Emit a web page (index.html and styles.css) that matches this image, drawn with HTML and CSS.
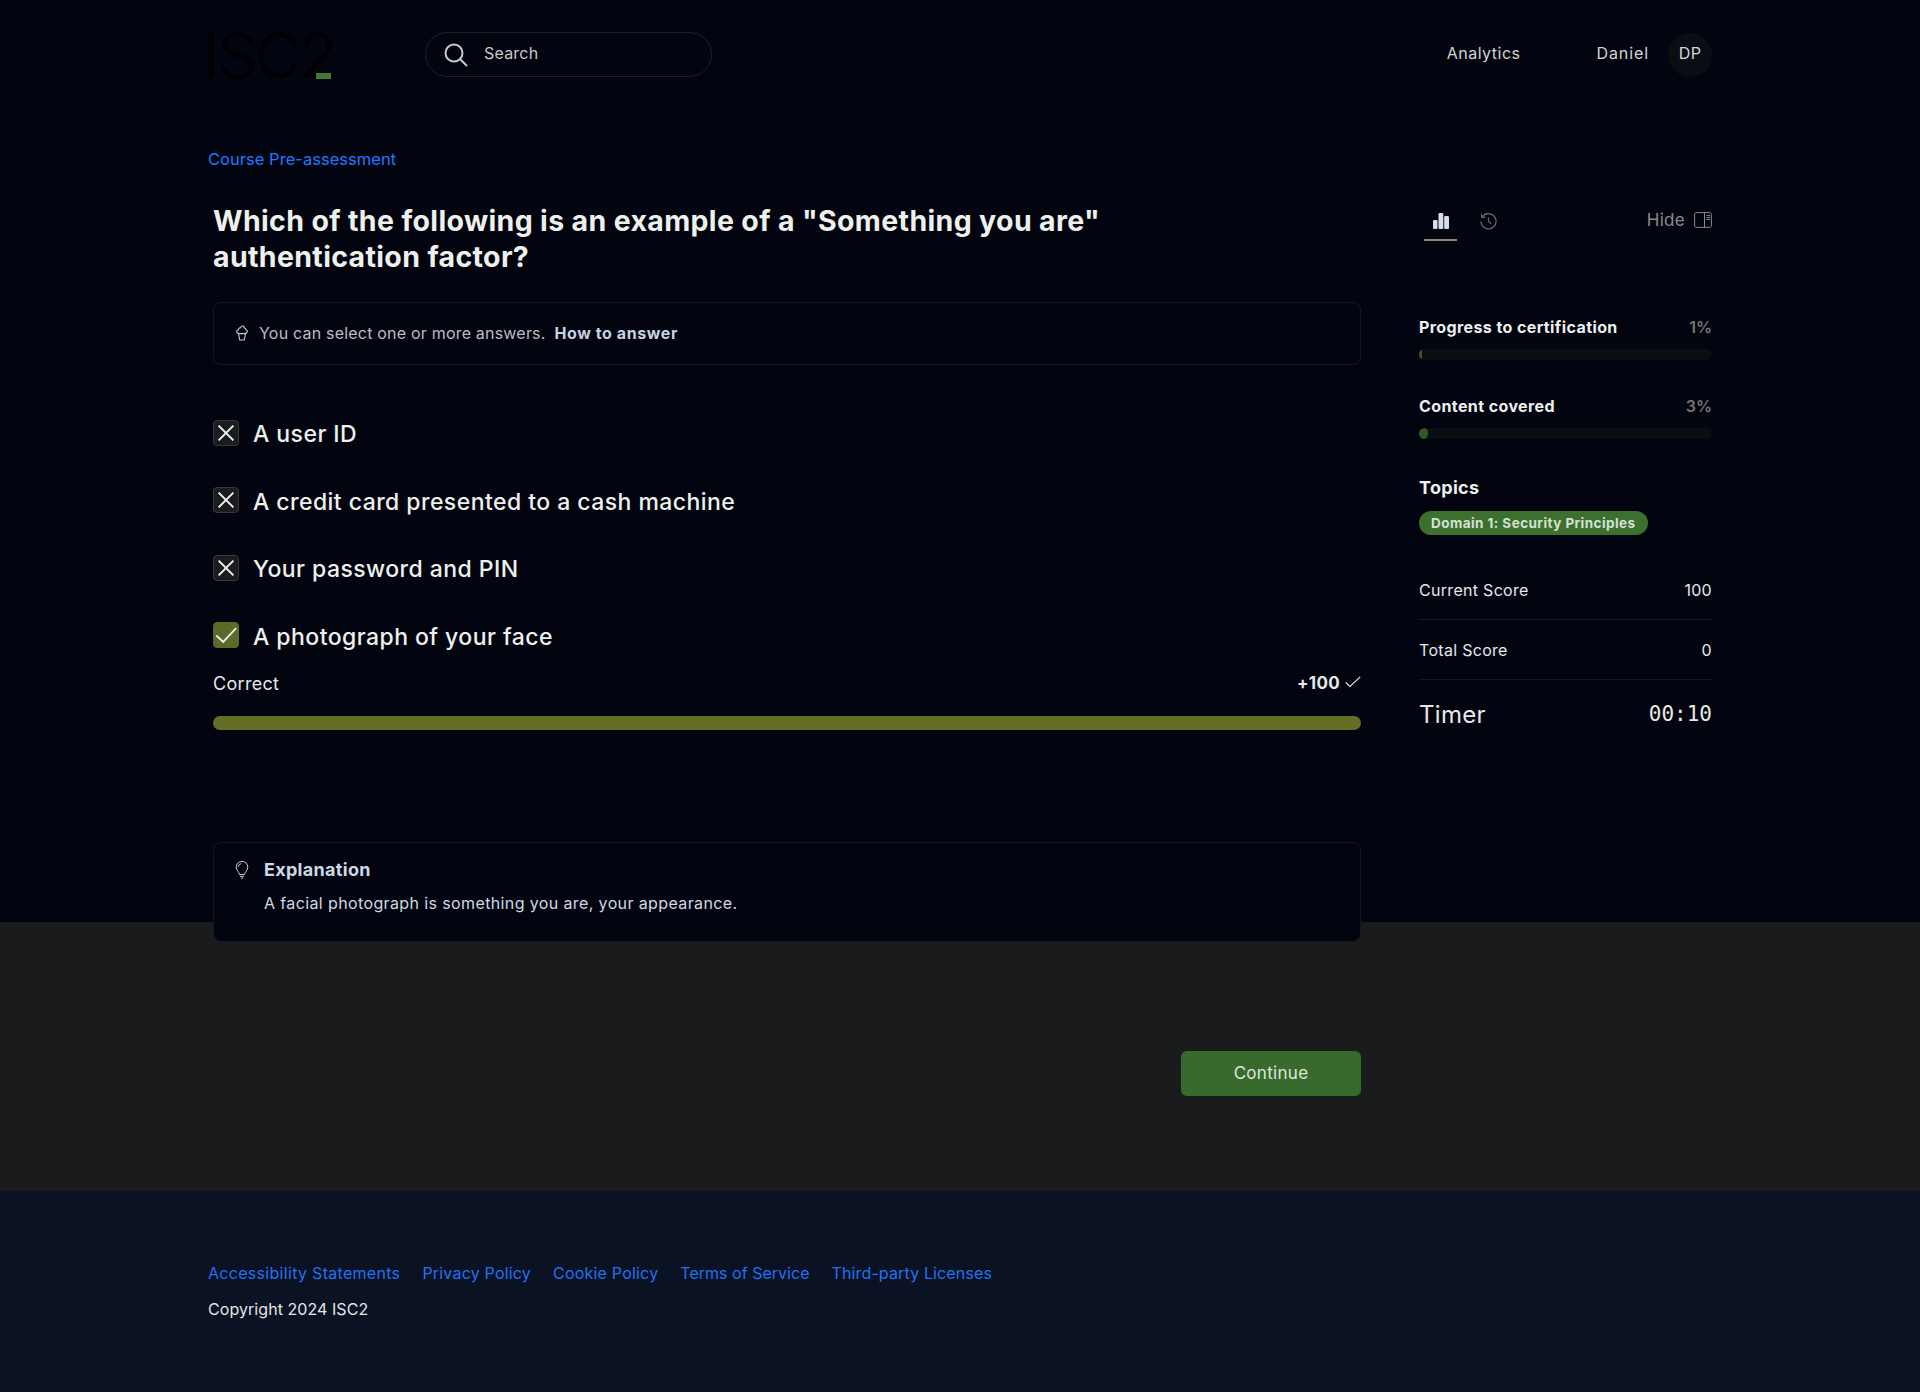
FILE: index.html
```html
<!DOCTYPE html>
<html lang="en">
<head>
<meta charset="utf-8">
<title>Course Pre-assessment</title>
<link rel="stylesheet" href="styles.css">
</head>
<body>
<div class="top">
  <header class="header">
    <div class="logo">ISC2<span class="logo-bar"></span></div>
    <div class="search">
      <svg class="search-icon" viewBox="0 0 24 24" fill="none" stroke="currentColor" stroke-width="2"><circle cx="10" cy="10" r="8.500"/><path d="M16 16l7 7"/></svg>
      <span class="search-text">Search</span>
    </div>
    <nav class="nav">
      <span class="nav-analytics">Analytics</span>
      <span class="nav-user">Daniel</span>
      <span class="avatar">DP</span>
    </nav>
  </header>
  <div class="crumb">Course Pre-assessment</div>
  <div class="columns">
    <main class="question">
      <h1 class="title">Which of the following is an example of a "Something you are" authentication factor?</h1>
      <div class="hint">
        <svg class="hint-icon" viewBox="0 0 14 16" fill="none" stroke="currentColor" stroke-width="1.100"><path d="M4 8.500C2.400 8.300 1.500 7.300 1.800 6 2 5 2.800 4.600 3.500 4.600 3.600 3 4.900 2.600 5.600 2.600 6 1.500 7 .8 8 1c1 .2 1.200 1 1 1.700 1.200.2 2 1 2 2 1.200.3 1.600 1.300 1.200 2.300-.3.8-1 1.300-2.200 1.500z"/><path d="M2.600 8.800h8.800M3.600 9l1.100 6h4.600l1.100-6"/></svg>
        <span class="hint-text">You can select one or more answers.</span>
        <strong class="hint-link">How to answer</strong>
      </div>
      <ul class="answers">
        <li class="answer">
          <span class="box"><svg viewBox="0 0 26 26" fill="none" stroke="currentColor" stroke-width="2.200"><path d="M5 5l16 16M21 5L5 21"/></svg></span>
          <span class="answer-text">A user ID</span>
        </li>
        <li class="answer">
          <span class="box"><svg viewBox="0 0 26 26" fill="none" stroke="currentColor" stroke-width="2.200"><path d="M5 5l16 16M21 5L5 21"/></svg></span>
          <span class="answer-text">A credit card presented to a cash machine</span>
        </li>
        <li class="answer">
          <span class="box"><svg viewBox="0 0 26 26" fill="none" stroke="currentColor" stroke-width="2.200"><path d="M5 5l16 16M21 5L5 21"/></svg></span>
          <span class="answer-text">Your password and PIN</span>
        </li>
        <li class="answer">
          <span class="box box-ok"><svg viewBox="0 0 26 26" fill="none" stroke="currentColor" stroke-width="2"><path d="M2.500 13.500l7.500 7L24 5.500"/></svg></span>
          <span class="answer-text">A photograph of your face</span>
        </li>
      </ul>
      <div class="result">
        <span>Correct</span>
        <span class="points"><b>+100</b><svg viewBox="0 0 16 12" fill="none" stroke="currentColor" stroke-width="1.100"><path d="M.8 6.500l4.200 4L15.200.8"/></svg></span>
      </div>
      <div class="result-bar"></div>
      <section class="explain">
        <svg class="bulb" viewBox="0 0 14 18" fill="none" stroke="currentColor" stroke-width="1"><path d="M4.500 13.500C4.300 11 1.200 9.500 1.200 6.200a5.800 5.800 0 0 1 11.600 0c0 3.300-3.100 4.800-3.300 7.300z"/><path d="M4.800 15.300h4.400M5.800 17h2.400M3.300 6a3.700 3.700 0 0 1 3-3.500"/></svg>
        <div>
          <h2 class="explain-title">Explanation</h2>
          <p class="explain-text">A facial photograph is something you are, your appearance.</p>
        </div>
      </section>
    </main>
    <aside class="side">
      <div class="tabs">
        <span class="tab tab-active"><svg viewBox="0 0 16 16" fill="currentColor"><rect x="0" y="7" width="4.500" height="9" rx="1"/><rect x="5.500" y="0" width="4.800" height="16" rx="1.200"/><rect x="11.200" y="3" width="4.800" height="13" rx="1.200"/></svg></span>
        <span class="tab tab-history"><svg viewBox="0 0 20 20" fill="none" stroke="currentColor" stroke-width="1.200"><path d="M3.200 5.500A8 8 0 1 1 2 10"/><path d="M2.600 2.200l.5 3.600 3.600-.5M10 5.800V10l2.600 2.400"/></svg></span>
        <span class="hide">Hide<svg viewBox="0 0 18 16" fill="none" stroke="currentColor" stroke-width="1"><rect x=".6" y=".6" width="16.800" height="14.800" rx="2"/><path d="M10.500.6v14.800M12.500 3.500h3.500M12.500 5.500h3.500M12.500 7.500h3.500"/></svg></span>
      </div>
      <div class="stat stat-first">
        <div class="stat-head"><strong>Progress to certification</strong><span>1%</span></div>
        <div class="track"><div class="fill" style="width:1%"></div></div>
      </div>
      <div class="stat stat-second">
        <div class="stat-head"><strong>Content covered</strong><span>3%</span></div>
        <div class="track"><div class="fill" style="width:3%"></div></div>
      </div>
      <h3 class="topics">Topics</h3>
      <span class="pill">Domain 1: Security Principles</span>
      <div class="score score-first"><span>Current Score</span><span>100</span></div>
      <div class="score"><span>Total Score</span><span>0</span></div>
      <div class="timer"><span>Timer</span><span class="clock">00:10</span></div>
    </aside>
  </div>
</div>
<div class="band"><button class="continue">Continue</button></div>
<footer class="footer">
  <div class="links">
    <span class="link-first">Accessibility Statements</span>
    <span>Privacy Policy</span>
    <span>Cookie Policy</span>
    <span class="link-terms">Terms of Service</span>
    <span class="link-third">Third-party Licenses</span>
  </div>
  <div class="copy">Copyright 2024 ISC2</div>
</footer>
</body>
</html>
```
FILE: styles.css
```css
* { box-sizing: border-box; }
html, body { margin: 0; padding: 0; }
body {
  background: #02050f;
  color: #e6e8ea;
  font-family: Inter, "Liberation Sans", sans-serif;
  font-size: 15px;
  letter-spacing: .3px;
}
.top { height: 922px; padding: 0 208px; }
.header { height: 108px; display: flex; align-items: flex-start; padding-top: 32px; }
.logo {
  width: 222px;
  height: 46px;
  margin-left: -5px;
  font-size: 63px;
  line-height: 46px;
  font-weight: 300;
  letter-spacing: -2px;
  color: #000;
  position: relative;
}
.logo-bar { position: absolute; left: 113px; top: 41px; width: 15px; height: 6px; background: #3f7a30; }
.search {
  width: 287px;
  height: 45px;
  border: 1px solid #1e2022;
  border-radius: 23px;
  display: flex;
  align-items: center;
  padding-left: 18px;
  gap: 16px;
  color: #c9c9c6;
}
.search-icon { width: 24px; height: 24px; }
.search-text { font-size: 16px; letter-spacing: .2px; padding-bottom: 3px; }
.nav { margin-left: auto; display: flex; align-items: center; height: 45px; color: #d4d5d2; font-size: 16px; }
.nav-analytics { margin-right: 76px; letter-spacing: .5px; padding-bottom: 3px; }
.nav-user { margin-right: 19px; letter-spacing: .9px; padding-bottom: 3px; }
.avatar {
  width: 44px; height: 44px; border-radius: 50%;
  background: #0a0d14;
  display: flex; align-items: center; justify-content: center;
  padding-bottom: 3px;
}
.crumb { color: #1f78ff; height: 44px; line-height: 44px; margin: 29px 0 22px; font-size: 16.500px; letter-spacing: .03px; }
.columns { display: flex; gap: 58px; padding-left: 5px; }
.question { width: 1148px; flex: none; }
.title { margin: 0; font-size: 28.500px; line-height: 36px; font-weight: 700; color: #eef0ec; width: 950px; letter-spacing: .35px; }
.hint {
  margin-top: 27px;
  height: 63px;
  border: 1px solid #15181e;
  border-radius: 8px;
  display: flex;
  align-items: center;
  padding: 0 0 2px 21px;
  color: #b9bdc0;
  font-size: 16px;
}
.hint-icon { width: 14px; height: 16px; margin-right: 10px; color: #c8cacb; }
.hint-text { margin-right: 9px; letter-spacing: .2px; }
.hint-link { color: #c5d3e3; font-weight: 700; letter-spacing: .58px; }
.answers { list-style: none; margin: 35px 0 0; padding: 0; }
.answer { height: 67.500px; display: flex; align-items: center; gap: 14px; font-size: 23px; font-weight: 500; color: #eef0ee; letter-spacing: .45px; }
.answer-text { padding-top: 1px; }
.box {
  width: 26px; height: 26px; flex: none;
  margin-top: -2px;
  border: 1px solid #36383a;
  border-radius: 4px;
  background: #1a1c1f;
  color: #eef0ee;
  display: flex;
}
.box svg { width: 24px; height: 24px; }
.box-ok { background: #5c6a28; border-color: #5c6a28; }
.result { display: flex; justify-content: space-between; align-items: center; height: 24px; margin-top: 1px; font-size: 18px; }
.points { display: flex; align-items: center; gap: 5px; font-size: 17px; }
.points svg { width: 16px; height: 12px; margin-top: -2px; }
.result-bar { height: 14px; margin-top: 21px; border-radius: 7px; background: #646f25; }
.explain {
  position: relative;
  margin-top: 112px;
  height: 100px;
  background: #02050f;
  border: 1px solid #15181e;
  border-radius: 8px;
  display: flex;
  padding: 16px 21px;
  gap: 15px;
  z-index: 1;
}
.bulb { width: 14px; height: 18px; margin-top: 2px; color: #c8cacb; flex: none; }
.explain-title { margin: 0; font-size: 18px; line-height: 22px; font-weight: 700; color: #cdd9e6; }
.explain-text { margin: 12px 0 0; font-size: 16px; line-height: 20px; color: #cdd9e6; letter-spacing: .38px; }
.side { width: 293px; flex: none; }
.tabs { display: flex; align-items: flex-start; height: 38px; margin-top: 1px; color: #8a8a88; }
.tab { display: flex; }
.tab-active { width: 33px; height: 37px; margin-left: 5px; border-bottom: 2px solid #8f8677; justify-content: center; padding-top: 9px; color: #d5deea; }
.tab-active svg { width: 16px; height: 16px; }
.tab-history { margin-left: 22px; padding-top: 8px; color: #6e6e6c; }
.tab-history svg { width: 19px; height: 19px; }
.hide { margin-left: auto; display: flex; align-items: center; gap: 9px; padding-top: 6px; font-size: 17px; }
.hide svg { width: 18px; height: 16px; }
.stat-head { display: flex; justify-content: space-between; font-size: 16px; line-height: 20px; color: #eef0ee; letter-spacing: .4px; }
.stat-head span { color: #77756f; font-weight: 600; letter-spacing: 0; }
.track { height: 11px; margin-top: 12px; border-radius: 6px; background: #0a0d12; overflow: hidden; }
.fill { height: 100%; border-radius: 6px; background: #2f5a25; }
.stat-first { margin-top: 75px; }
.stat-second { margin-top: 36px; }
.topics { margin: 38px 0 0; font-size: 18px; line-height: 22px; font-weight: 700; color: #eef0ee; }
.pill {
  display: inline-block;
  margin-top: 12px;
  height: 24px;
  line-height: 24px;
  padding: 0 12px;
  border-radius: 12px;
  background: #3c702f;
  color: #d6e0d2;
  font-size: 13.500px;
  font-weight: 700;
  letter-spacing: .44px;
}
.score { display: flex; justify-content: space-between; align-items: center; height: 60px; border-bottom: 1px solid #14171c; font-size: 16px; color: #e3e8ec; }
.score-first { margin-top: 25px; }
.timer { display: flex; justify-content: space-between; align-items: center; height: 68px; font-size: 24px; color: #e8e8e4; }
.clock { font-family: "DejaVu Sans Mono", monospace; font-size: 21px; letter-spacing: 0; }
.band { height: 269px; background: #1a1b1c; padding: 129px 559px 0 0; display: flex; justify-content: flex-end; align-items: flex-start; }
.continue {
  width: 180px; height: 45px;
  background: #396a2d;
  border: 0;
  border-radius: 6px;
  color: #dfe6dc;
  font: inherit;
  font-size: 17px;
  letter-spacing: .3px;
  padding-bottom: 3px;
}
.footer { height: 201px; background: #0b1223; padding: 70px 208px 0; }
.links { display: flex; gap: 22px; color: #2272f0; font-size: 16px; line-height: 24px; letter-spacing: .2px; }
.link-first { letter-spacing: .3px; }
.link-terms { letter-spacing: .02px; }
.link-third { letter-spacing: .13px; }
.copy { margin-top: 12px; font-size: 16px; line-height: 24px; color: #e3e5e8; letter-spacing: .06px; }
```
